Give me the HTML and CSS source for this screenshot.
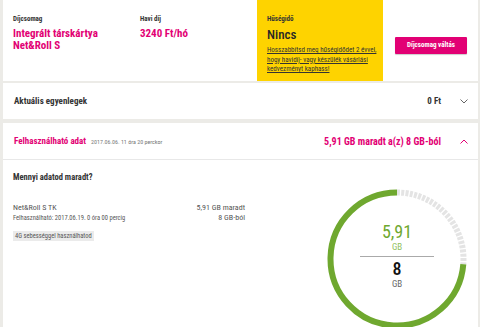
FILE: index.html
```html
<!doctype html>
<html lang="hu">
    <head>
        <meta charset="UTF-8" />
        <title>Díjcsomag</title>
        <link rel="stylesheet" href="styles.css">
    </head>
    <body>
        <!-- Tariff summary -->
        <section class="card plan">
            <div class="plan-col">
                <div class="label">Díjcsomag</div>
                <div class="value">Integrált társkártya<br />Net&amp;Roll S</div>
            </div>
            <div class="plan-col fee">
                <div class="label">Havi díj</div>
                <div class="value">3240 Ft/hó</div>
            </div>
            <div class="loyalty">
                <div class="label">Hűségidő</div>
                <div class="loyalty-value">Nincs</div>
                <a class="loyalty-link" href="#">Hosszabbítsd meg hűségidődet 2 évvel, hogy havidíj- vagy készülék vásárlási kedvezményt kaphass!</a>
            </div>
            <div class="plan-action">
                <button class="btn">Díjcsomag váltás</button>
            </div>
        </section>

        <!-- Balances -->
        <section class="card row-head">
            <span class="row-title">Aktuális egyenlegek</span>
            <span class="row-amount">0 Ft</span>
            <svg class="chev" width="8" height="5" viewBox="0 0 8 5"><path d="M0.5 0.5 L4 4 L7.5 0.5" fill="none" stroke="#666" stroke-width="1"/></svg>
        </section>

        <!-- Data -->
        <section class="card data">
            <div class="row-head open">
                <span class="row-title pink">Felhasználható adat</span>
                <span class="stamp">2017.06.06. 11 óra 20 perckor</span>
                <span class="row-amount pink">5,91 GB maradt a(z) 8 GB-ból</span>
                <svg class="chev" width="8" height="5" viewBox="0 0 8 5"><path d="M0.5 4.5 L4 1 L7.5 4.5" fill="none" stroke="#e20074" stroke-width="1"/></svg>
            </div>
            <div class="data-body">
                <div class="data-info">
                    <div class="question">Mennyi adatod maradt?</div>
                    <div class="line first">
                        <span>Net&amp;Roll S TK</span>
                        <span>5,91 GB maradt</span>
                    </div>
                    <div class="line small">
                        <span>Felhasználható: 2017.06.19. 0 óra 00 percig</span>
                        <span class="big">8 GB-ból</span>
                    </div>
                    <span class="tag">4G sebességgel használhatod</span>
                </div>
                <div class="chart">
                    <svg width="140" height="140" viewBox="0 0 140 140">
                        <path d="M70 3.5 A66.5 66.5 0 0 1 136.3 75.2" fill="none" stroke="#e4e4e4" stroke-width="6" stroke-dasharray="3 1.3"/>
                        <path d="M136.3 75.2 A66.5 66.5 0 1 1 70 3.5" fill="none" stroke="#6fa82f" stroke-width="6"/>
                    </svg>
                    <div class="chart-text">
                        <div class="left-num">5,91</div>
                        <div class="left-unit">GB</div>
                        <div class="divider"></div>
                        <div class="total-num">8</div>
                        <div class="total-unit">GB</div>
                    </div>
                </div>
            </div>
        </section>
    </body>
</html>
```

FILE: styles.css
```css
:root {
    --magenta: #e20074;
    --yellow: #fed300;
    --green: #6fa82f;
    --bg: #ecebe7;
}

body {
    margin: 0;
    padding: 0 2px 0 3px;
    background: var(--bg);
    font-family: Roboto, "Liberation Sans", sans-serif;
    font-stretch: 77%;
    color: #262626;
}

.card {
    background: #fff;
    margin-bottom: 4px;
}

/* tariff summary */
.plan {
    display: flex;
    height: 81px;
    margin-bottom: 2px;
}

.plan-col {
    width: 127px;
    padding: 15px 0 0 10px;
}

.plan-col.fee {
    width: 117px;
    padding-left: 0;
}

.label {
    font-size: 7px;
    font-weight: 700;
    color: #333;
    line-height: 9px;
}

.value {
    margin-top: 4px;
    font-size: 11px;
    font-weight: 700;
    line-height: 12px;
    color: var(--magenta);
}

.loyalty {
    width: 116px;
    background: var(--yellow);
    padding: 15px 0 0 10px;
}

.loyalty-value {
    margin-top: 3px;
    font-size: 13px;
    font-weight: 500;
    line-height: 16px;
}

.loyalty-link {
    display: block;
    margin-top: 3px;
    font-size: 7px;
    line-height: 9.5px;
    color: #333;
    padding-right: 6px;
}

.plan-action {
    flex: 1;
    padding: 32px 0 0 12px;
}

.btn {
    width: 72px;
    height: 17px;
    border: none;
    border-radius: 1px;
    background: var(--magenta);
    color: #fff;
    font-family: inherit;
    font-stretch: 77%;
    font-size: 7px;
    font-weight: 700;
    padding: 0;
    box-shadow: 0 1px 1px rgba(0, 0, 0, 0.2);
}

/* collapsible rows */
.row-head {
    display: flex;
    align-items: center;
    height: 36px;
    padding: 0 10px 0 11px;
}

.row-head.open {
    border-bottom: 1px solid #e8e8e8;
}

.row-title {
    font-size: 9px;
    font-weight: 700;
    color: #333;
}

.pink {
    color: var(--magenta);
}

.stamp {
    margin-left: 5px;
    font-size: 6px;
    color: #777;
}

.row-amount {
    margin-left: auto;
    font-size: 9px;
    font-weight: 700;
    color: #333;
}

.row-amount.pink {
    font-size: 10px;
    color: var(--magenta);
}

.chev {
    margin-left: 19px;
}

/* data detail */
.data {
    margin-bottom: 0;
    height: 204px;
    overflow: hidden;
}

.data-body {
    display: flex;
}

.data-info {
    width: 232px;
    padding: 12px 0 0 10px;
}

.question {
    font-size: 8.5px;
    font-weight: 700;
    color: #333;
    line-height: 10px;
}

.line {
    display: flex;
    justify-content: space-between;
    font-size: 8px;
    color: #555;
    line-height: 10px;
}

.line.first {
    margin-top: 21px;
}

.line.small {
    font-size: 6.5px;
}

.line .big {
    font-size: 8px;
}

.tag {
    display: inline-block;
    margin-top: 3px;
    padding: 0 2px;
    background: #ebebeb;
    font-size: 6.5px;
    line-height: 10px;
    color: #555;
}

.chart {
    display: grid;
    margin: 29px 0 0 82px;
    width: 140px;
    height: 140px;
}

.chart svg,
.chart-text {
    grid-area: 1 / 1;
}

.chart-text {
    display: flex;
    flex-direction: column;
    align-items: center;
    padding-top: 33px;
}

.left-num {
    font-size: 18px;
    line-height: 20px;
    color: var(--green);
}

.left-unit {
    font-size: 9px;
    line-height: 10px;
    color: #8fc15c;
}

.divider {
    width: 74px;
    height: 1px;
    background: #aaa;
    margin: 4px 0 2px;
}

.total-num {
    font-size: 18px;
    line-height: 20px;
    font-weight: 500;
    color: #111;
}

.total-unit {
    font-size: 9px;
    line-height: 10px;
    color: #666;
}
```
